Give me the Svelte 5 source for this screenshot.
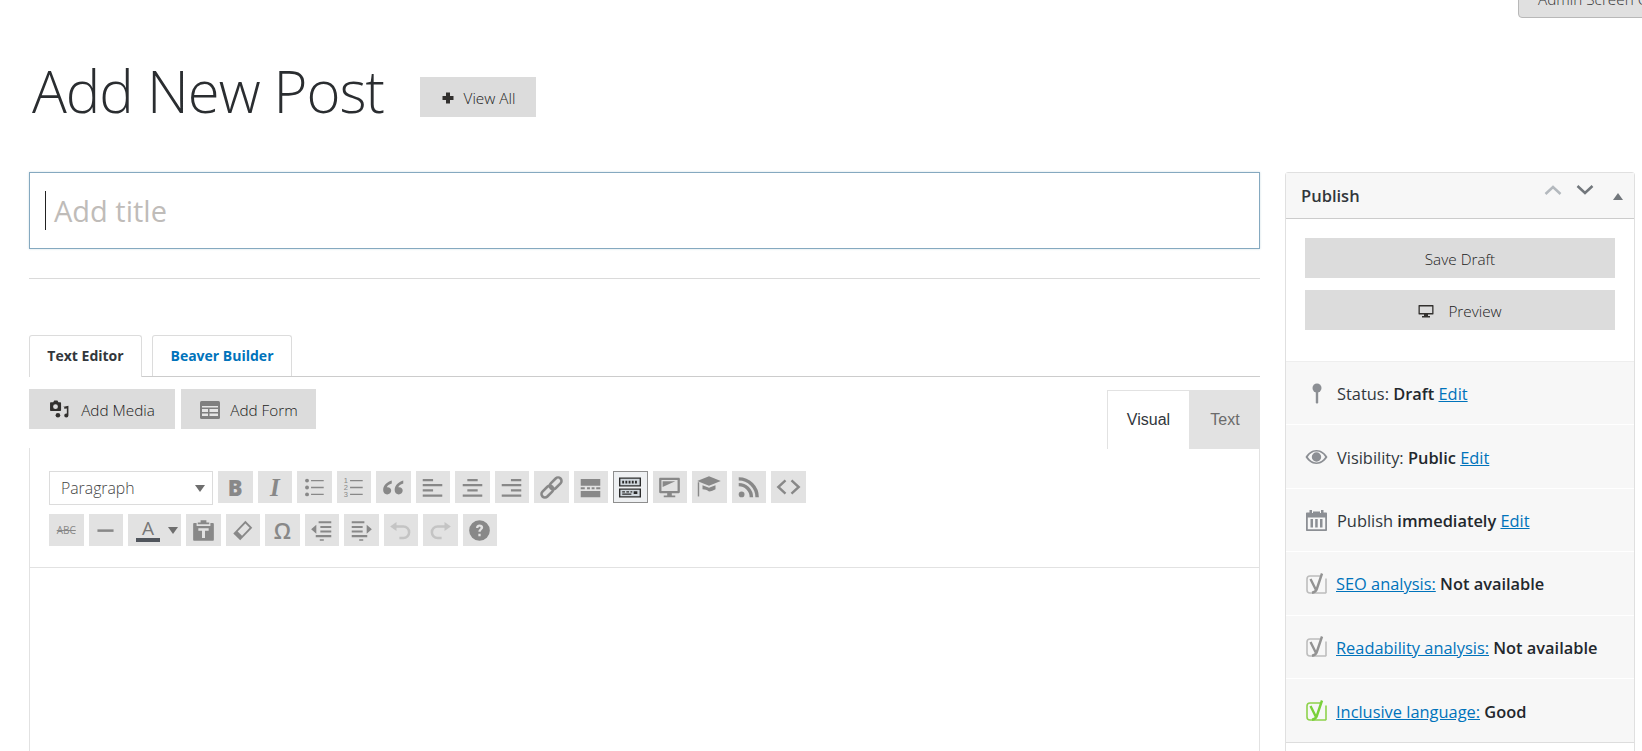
<script>
  const rows = [
    { label: 'SEO analysis:', value: 'Not available', color: '#bdbdbd', tick: '#939393' },
    { label: 'Readability analysis:', value: 'Not available', color: '#bdbdbd', tick: '#939393' },
    { label: 'Inclusive language:', value: 'Good', color: '#8ed24c', tick: '#7ad03a' }
  ];
</script>

<div class="page">
  <div class="top">
    <div class="screen-tab">Admin Screen Options</div>
  </div>

  <div class="heading">
    <h1>Add New Post</h1>
    <a class="btn view-all" href="#top">
      <svg width="14" height="14" viewBox="0 0 14 14"><path d="M5 1.500h4V5h3.500v4H9v3.500H5V9H1.500V5H5z" fill="#32302e" /></svg>
      View All
    </a>
  </div>

  <div class="columns">
    <div class="main">
      <div class="title-box"><span class="caret"></span><span class="placeholder">Add title</span></div>
      <hr />

      <div class="tabs">
        <div class="tab active">Text Editor</div>
        <div class="tab builder">Beaver Builder</div>
      </div>

      <div class="media-row">
        <div class="media-buttons">
          <div class="btn media">
            <svg width="21" height="21" viewBox="0 0 20 20" fill="#32302e">
              <path d="M2 3h2l1-1.500h3L9 3h1.500c.6 0 1 .4 1 1v6.500c0 .6-.4 1-1 1H2c-.6 0-1-.4-1-1V4c0-.6.4-1 1-1zm4.200 2a2.300 2.300 0 1 0 0 4.600 2.300 2.300 0 0 0 0-4.600z" />
              <path d="M13 7.500l5.500-1v9.200a2 2 0 1 1-2-2c.2 0 .3 0 .5.100V9l-2.500.4v-1.900z" />
              <circle cx="8.500" cy="15.500" r="2.200" />
            </svg>
            Add Media
          </div>
          <div class="btn form">
            <svg width="22" height="20" viewBox="0 0 22 20">
              <rect x="1" y="1" width="20" height="18" rx="1.500" fill="#808080" />
              <path d="M3 6h16v1.500H3zM3 9h6v3H3zM10.500 9H19v3h-8.500zM3 13.500h6v2.500H3zM10.500 13.500H19V16h-8.500z" fill="#e6e6e6" />
            </svg>
            Add Form
          </div>
        </div>
        <div class="mode-tabs">
          <div class="mode on">Visual</div>
          <div class="mode">Text</div>
        </div>
      </div>

      <div class="editor">
        <div class="toolbar">
          <div class="tb-row">
            <div class="select">Paragraph<span class="arrow"></span></div>
            <div class="tb glyph bold">B</div>
            <div class="tb glyph ital">I</div>
            <div class="tb"><svg viewBox="0 0 20 20"><circle cx="3.500" cy="4" r="1.700" /><circle cx="3.500" cy="10" r="1.700" /><circle cx="3.500" cy="16" r="1.700" /><path d="M7 3.400h11v1.200H7zM7 9.400h11v1.200H7zM7 15.400h11v1.200H7z" /></svg></div>
            <div class="tb"><svg viewBox="0 0 20 20"><text x="1.500" y="6.500" class="num">1</text><text x="1.500" y="12.500" class="num">2</text><text x="1.500" y="18.500" class="num">3</text><path d="M7 3.400h11v1.200H7zM7 9.400h11v1.200H7zM7 15.400h11v1.200H7z" /></svg></div>
            <div class="tb"><svg viewBox="0 0 20 20"><path d="M8.500 4C5 5 1 7.800 1 12.200 1 14.500 2.500 16 4.500 16S8 14.500 8 12.700s-1.300-3-3-3c-.3 0-.6 0-.8.100.5-1.200 2-2.600 4.300-3.200zM18.500 4C15 5 11 7.800 11 12.200c0 2.300 1.500 3.800 3.500 3.800s3.500-1.500 3.500-3.300-1.300-3-3-3c-.3 0-.6 0-.8.100.5-1.200 2-2.600 4.300-3.200z" /></svg></div>
            <div class="tb"><svg viewBox="0 0 20 20"><path d="M1.500 2.500h9v2h-9zM1.500 7h17v2h-17zM1.500 11.500h9v2h-9zM1.500 16h17v2h-17z" /></svg></div>
            <div class="tb"><svg viewBox="0 0 20 20"><path d="M5.500 2.500h9v2h-9zM1.500 7h17v2h-17zM5.500 11.500h9v2h-9zM1.500 16h17v2h-17z" /></svg></div>
            <div class="tb"><svg viewBox="0 0 20 20"><path d="M9.500 2.500h9v2h-9zM1.500 7h17v2h-17zM9.500 11.500h9v2h-9zM1.500 16h17v2h-17z" /></svg></div>
            <div class="tb">
              <svg viewBox="0 0 20 20" class="line">
                <rect x="7.600" y="3.400" width="12" height="6" rx="3" transform="rotate(-45 13.600 6.400)" stroke-width="2.200" />
                <rect x=".4" y="10.600" width="12" height="6" rx="3" transform="rotate(-45 6.400 13.600)" stroke-width="2.200" />
              </svg>
            </div>
            <div class="tb"><svg viewBox="0 0 20 20"><path d="M1.500 2.500h17v6h-17zM1.500 13h17v5.500h-17zM1.500 9.800h3.500v1.700H1.500zM7 9.800h2.500v1.700H7zM11 9.800h2.500v1.700H11zM15 9.800h3.500v1.700H15z" /></svg></div>
            <div class="tb pressed">
              <svg viewBox="0 0 24 22">
                <path d="M0 0h24v10H0zM0 12h24v10H0z" fill="#2b2b2b" />
                <path d="M1.500 1.500h21v7h-21zM1.500 13.500h21v7h-21z" fill="#cfd6dc" />
                <path d="M3.500 3.500h2v3h-2zM7 3.500h2v3H7zM10.500 3.500h2v3h-2zM14 3.500h2v3h-2zM17.500 3.500h2v3h-2zM3.500 15h3v1.500h-3zM8 15h3v1.500H8zM12.500 15h2v1.500h-2zM16 15h4v3h-4zM3.500 17.500h10V19h-10z" fill="#2b2b2b" />
              </svg>
            </div>
            <div class="tb"><svg viewBox="0 0 20 20"><path d="M2 1.500h16c.6 0 1 .4 1 1V14c0 .6-.4 1-1 1h-6v2h3v1.500H5V17h3v-2H2c-.6 0-1-.4-1-1V2.500c0-.6.4-1 1-1zm1 2v9.500h14V3.500z" /><path d="M4 4.500h11l-11 5z" /></svg></div>
            <div class="tb"><svg viewBox="0 0 22 20" class="cap"><path d="M11 1l10 4-10 4-10-4z" /><path d="M5.500 8.500L11 10.700l5.500-2.200v3.300c-1.700 1-3.500 1.500-5.500 2-1.500-1.300-3.500-2-5.500-2z" /><path d="M1.500 6h1.200v12H1.500z" /></svg></div>
            <div class="tb"><svg viewBox="0 0 20 20"><circle cx="4" cy="16" r="2.500" /><path d="M1.500 7.500a11 11 0 0 1 11 11" class="rss" /><path d="M1.500 2.500a16 16 0 0 1 16 16" class="rss" /></svg></div>
            <div class="tb"><svg viewBox="0 0 22 20" class="line code"><path d="M8.500 4.500L2.500 10l6 5.500M13.500 4.500l6 5.500-6 5.500" stroke-width="2" /></svg></div>
          </div>
          <div class="tb-row">
            <div class="tb glyph strike">ABC</div>
            <div class="tb"><svg viewBox="0 0 20 20"><path d="M3 9h14v2.200H3z" /></svg></div>
            <div class="tb wide">
              <span class="color-a">A</span><span class="arrow"></span>
            </div>
            <div class="tb"><svg viewBox="0 0 20 20"><path d="M7.500 1h5v2H15v1.500H5V3h2.500zM2 3.500h2V6h12V3.500h2c.6 0 1 .4 1 1V18c0 .6-.4 1-1 1H2c-.6 0-1-.4-1-1V4.500c0-.6.4-1 1-1z" /><path d="M5.500 8h9v2.300h-3.200v6.200H8.700v-6.200H5.500z" fill="#e2e2e2" /></svg></div>
            <div class="tb"><svg viewBox="0 0 20 20"><path d="M12.500 1.500l6 6L8 18.500l-6-6z" /><path d="M12.500 3.900l3.700 3.600-6.600 7-3.800-3.700z" fill="#e2e2e2" /></svg></div>
            <div class="tb glyph omega">Ω</div>
            <div class="tb"><svg viewBox="0 0 20 20"><path d="M7.500 2h11v1.800h-11zM9 6h9.500v1.800H9zM9 10h9.500v1.800H9zM5 14h13.500v1.800H5zM8.500 17.500h3.500V19H8.500zM1 8.900l4.500-4v8z" /></svg></div>
            <div class="tb"><svg viewBox="0 0 20 20"><path d="M1.500 2h11v1.800h-11zM1.500 6h9.500v1.800H1.500zM1.500 10h9.500v1.800H1.500zM1.500 14h13.500v1.800H1.500zM8 17.500h3.500V19H8zM19 8.900l-4.500-4v8z" /></svg></div>
            <div class="tb"><svg viewBox="0 0 20 20" class="off"><path d="M6.500 2.500v8l-5.500-4z" stroke="none" fill="#c4c4c4" /><path d="M6 6.500h6.500a5 5 0 0 1 0 10H9" stroke-width="2.200" /></svg></div>
            <div class="tb"><svg viewBox="0 0 20 20" class="off"><path d="M13.500 2.500v8l5.500-4z" stroke="none" fill="#c4c4c4" /><path d="M14 6.500H7.500a5 5 0 0 0 0 10H11" stroke-width="2.200" /></svg></div>
            <div class="tb"><svg viewBox="0 0 20 20"><path fill-rule="evenodd" d="M10 1a9 9 0 1 1 0 18 9 9 0 0 1 0-18zM7 7.800h2c0-.7.400-1.100 1-1.100s1 .4 1 .9c0 1-2 1.300-2 3.400h2c0-1.500 2.200-1.800 2.200-3.700C13.200 5.700 11.900 4.800 10 4.800s-3 1.200-3 3zM9 12.800V15h2v-2.200z" /></svg></div>
          </div>
        </div>
      </div>
    </div>

    <aside class="side">
      <div class="box-head">
        <h2>Publish</h2>
        <div class="head-icons">
          <svg width="18" height="10" viewBox="0 0 18 10" class="chev up"><path d="M1.500 9L9 2l7.500 7" /></svg>
          <svg width="18" height="10" viewBox="0 0 18 10" class="chev"><path d="M1.500 1L9 8l7.500-7" /></svg>
          <span class="collapse"></span>
        </div>
      </div>
      <div class="actions">
        <div class="btn full">Save Draft</div>
        <div class="btn full">
          <svg width="16" height="14" viewBox="0 0 16 14" fill="#32302e"><path fill-rule="evenodd" d="M1 1h14c.3 0 .5.200.5.500v8.500c0 .3-.2.500-.5.500h-5v1.500h2V13.500H4V12h2v-1.500H1c-.3 0-.5-.2-.5-.5V1.500C.5 1.200.7 1 1 1zm.8 1.500V9h12.400V2.500z" /></svg>
          <span class="gap">Preview</span>
        </div>
      </div>
      <div class="meta">
        <div class="row">
          <span class="icon"><svg width="12" height="22" viewBox="4 0 12 22" fill="#8c8f94"><circle cx="10" cy="5" r="4.500" /><path d="M8.800 8h2.400v11.500l-1.200 1.500-1.200-1.500z" /></svg></span>
          <span>Status: <b>Draft</b> <a href="#top">Edit</a></span>
        </div>
        <div class="row">
          <span class="icon"><svg width="23" height="16" viewBox="0 0 23 16" fill="#8c8f94"><path fill-rule="evenodd" d="M11.500 1C16.500 1 20.500 4.500 22.500 8c-2 3.500-6 7-11 7s-9-3.500-11-7c2-3.500 6-7 11-7zm0 1.600C8 2.600 5 4.500 2.800 8c2.200 3.500 5.200 5.400 8.700 5.400s6.500-1.900 8.700-5.400C18 4.500 15 2.600 11.500 2.600zm0 .7a4.700 4.700 0 1 1 0 9.400 4.700 4.700 0 0 1 0-9.400z" /></svg></span>
          <span>Visibility: <b>Public</b> <a href="#top">Edit</a></span>
        </div>
        <div class="row">
          <span class="icon"><svg width="21" height="21" viewBox="0 0 21 21" fill="#8c8f94"><path fill-rule="evenodd" d="M3.500 0H6v3h1V1.500h7V3h1V0h2.500v2.500H20c.6 0 1 .4 1 1V20c0 .6-.4 1-1 1H1c-.6 0-1-.4-1-1V3.500c0-.6.4-1 1-1h2.500zM1.800 7.500v11.700h17.400V7.500zM4.500 9h2.500v8.500H4.500zM9.200 9h2.500v8.500H9.200zM14 9h2.500v8.500H14z" /></svg></span>
          <span>Publish <b>immediately</b> <a href="#top">Edit</a></span>
        </div>
        {#each rows as r}
          <div class="row yoast">
            <span class="icon"><svg width="21" height="22" viewBox="0 0 21 22" fill="none">
              <path d="M14.500 3H4C2.300 3 1 4.300 1 6v11c0 1.700 1.300 3 3 3h15.500l.500-.5V5.500" stroke={r.color} stroke-width="1.600" />
              <path d="M4.500 6l5.500 11M16 .5L10.800 16c-.7 2-2 3.300-4.800 3.700" stroke={r.tick} stroke-width="2.400" />
            </svg></span>
            <span><a href="#top">{r.label}</a> <b>{r.value}</b></span>
          </div>
        {/each}
      </div>
    </aside>
  </div>
</div>

<style>
  :global(body) {
    margin: 0;
    background: #fff;
  }

  .page {
    width: 1642px;
    height: 751px;
    overflow: hidden;
    font-family: "Open Sans", sans-serif;
    color: #32373c;
    background: #fff;
  }

  .top {
    height: 18px;
    display: flex;
    justify-content: flex-end;
    align-items: flex-end;
    overflow: hidden;
  }

  .screen-tab {
    flex: none;
    width: 190px;
    margin-right: -66px;
    height: 30px;
    line-height: 21px;
    padding-left: 19px;
    box-sizing: border-box;
    background: #e0e0e0;
    border: 1px solid #b8b8b8;
    border-radius: 0 0 4px 4px;
    font-size: 15.300px;
    font-weight: 300;
    color: #333;
    white-space: nowrap;
  }

  .heading {
    display: flex;
    align-items: flex-start;
    height: 154px;
    padding-left: 32px;
    box-sizing: border-box;
  }

  h1 {
    margin: 0;
    padding-top: 35px;
    font-size: 58px;
    line-height: 76px;
    font-weight: 300;
    color: #2a2d30;
    letter-spacing: -1px;
  }

  .btn {
    display: flex;
    align-items: center;
    justify-content: center;
    background: #dcdcdc;
    color: #222;
    font-size: 15.300px;
    text-decoration: none;
    box-sizing: border-box;
    height: 40px;
    padding-top: 1px;
  }

  .view-all {
    margin: 59px 0 0 36px;
    width: 116px;
    gap: 9px;
    font-weight: 300;
  }

  .columns {
    display: grid;
    grid-template-columns: 1231px 350px;
    gap: 25px;
    padding-left: 29px;
  }

  .title-box {
    height: 77px;
    box-sizing: border-box;
    border: 1px solid #85a9c0;
    box-shadow: 0 0 2px rgba(133, 169, 192, .4);
    display: flex;
    align-items: center;
    padding-left: 15px;
  }

  .caret {
    width: 1px;
    height: 39px;
    background: #222;
    margin-right: 8px;
  }

  .placeholder {
    font-size: 29px;
    color: #bfbcb9;
  }

  hr {
    margin: 29px 0 0;
    border: 0;
    border-top: 1px solid #dadada;
  }

  .tabs {
    display: flex;
    gap: 10px;
    margin-top: 56px;
    height: 41px;
    border-bottom: 1px solid #ccc;
  }

  .tab {
    box-sizing: border-box;
    height: 41px;
    line-height: 39px;
    font-size: 14px;
    font-weight: 700;
    border: 1px solid #dcdcdc;
    border-bottom: 0;
    border-radius: 3px 3px 0 0;
    text-align: center;
  }

  .tab.active {
    width: 113px;
    background: #fff;
    height: 42px;
  }

  .builder {
    color: #0073bb;
    width: 140px;
  }

  .media-row {
    display: flex;
    justify-content: space-between;
    align-items: flex-start;
    margin-top: 12px;
    height: 60px;
  }

  .media-buttons {
    display: flex;
    gap: 6px;
  }

  .media { width: 146px; gap: 11px; font-weight: 300; }
  .form { width: 135px; gap: 9px; font-weight: 300; }

  .mode-tabs {
    display: flex;
    font-family: "Liberation Sans", sans-serif;
    font-size: 16px;
    margin-top: 1px;
  }

  .mode {
    box-sizing: border-box;
    width: 70px;
    height: 59px;
    line-height: 59px;
    text-align: center;
    background: #e2e2e2;
    color: #6b6b6b;
  }

  .mode.on {
    width: 83px;
    background: #fff;
    color: #32373c;
    border: 1px solid #e2e2e2;
    border-bottom: 0;
    line-height: 57px;
  }

  .editor {
    height: 320px;
    border: 1px solid #e2e2e2;
    border-top: 0;
    margin-top: -1px;
  }

  .toolbar {
    height: 120px;
    box-sizing: border-box;
    padding: 23px 0 0 19px;
    border-bottom: 1px solid #e2e2e2;
  }

  .tb-row {
    display: flex;
    gap: 5px;
    margin-bottom: 11px;
    height: 32px;
  }

  .select {
    box-sizing: border-box;
    width: 164px;
    height: 34px;
    border: 1px solid #dcdcdc;
    padding-left: 11px;
    font-size: 15.800px;
    color: #444;
    font-weight: 300;
    display: flex;
    justify-content: space-between;
    align-items: center;
    padding-right: 7px;
  }

  .arrow {
    width: 0;
    height: 0;
    border-left: 5px solid transparent;
    border-right: 5px solid transparent;
    border-top: 7px solid #6e6e6e;
  }

  .tb {
    box-sizing: border-box;
    width: 34.500px;
    height: 32px;
    background: #e2e2e2;
    display: flex;
    align-items: center;
    justify-content: center;
    color: #888;
  }

  .tb svg {
    width: 23px;
    height: 23px;
    fill: #888;
  }

  .tb .line {
    fill: none;
    stroke: #888;
  }

  .tb .off {
    fill: none;
    stroke: #c4c4c4;
  }

  .tb .rss {
    fill: none;
    stroke: #888;
    stroke-width: 3;
  }

  .tb .cap {
    width: 26px;
    height: 24px;
  }

  .tb .code {
    width: 27px;
    height: 24px;
  }

  .num {
    font-family: "Liberation Sans", sans-serif;
    font-size: 6.500px;
  }

  .tb.pressed {
    background: #eef0f2;
    border: 1px solid #8e8e8e;
  }

  .tb.pressed svg {
    width: 22px;
    height: 21px;
  }

  .glyph { line-height: 1; }

  .bold {
    font-size: 22px;
    font-weight: 800;
    font-family: "Open Sans", sans-serif;
  }

  .ital {
    font-size: 25px;
    font-weight: 700;
    font-style: italic;
    font-family: "Liberation Serif", serif;
  }

  .strike {
    font-size: 10px;
    text-decoration: line-through;
    font-family: "Open Sans", sans-serif;
  }

  .omega {
    font-size: 22px;
    font-family: "Open Sans", sans-serif;
    font-weight: 600;
  }

  .wide {
    width: 53px;
    gap: 8px;
    padding-left: 5px;
  }

  .color-a {
    width: 24px;
    font-size: 19px;
    line-height: 20px;
    text-align: center;
    border-bottom: 4px solid #50555c;
    color: #777;
  }

  .side {
    border: 1px solid #e0e0e0;
    border-radius: 3px 3px 0 0;
    height: 580px;
    font-size: 16.400px;
  }

  .box-head {
    height: 45px;
    background: #f7f7f7;
    border-bottom: 1px solid #ccc;
    display: flex;
    align-items: center;
    justify-content: space-between;
    padding: 0 11px 0 15px;
  }

  h2 {
    margin: 0;
    font-size: 16.500px;
    font-weight: 600;
    color: #32373c;
  }

  .head-icons {
    display: flex;
    align-items: center;
    gap: 14px;
    margin-bottom: 12px;
  }

  .chev {
    fill: none;
    stroke: #72777c;
    stroke-width: 2.500;
  }

  .chev.up { stroke: #b4b9be; }

  .collapse {
    width: 0;
    height: 0;
    border-left: 5px solid transparent;
    border-right: 5px solid transparent;
    border-bottom: 7px solid #72777c;
    margin: 14px 0 0 5px;
  }

  .actions {
    height: 143px;
    box-sizing: border-box;
    padding: 19px 19px 0;
    display: flex;
    flex-direction: column;
    gap: 12px;
    border-bottom: 1px solid #eee;
  }

  .full { font-weight: 300; }
  .gap { margin-left: 14px; }

  .meta { background: #f7f7f7; border-bottom: 1px solid #ddd; }

  .row {
    height: 63.400px;
    box-sizing: border-box;
    display: flex;
    align-items: center;
    padding: 1px 0 0 19px;
    border-bottom: 1px solid #fff;
    color: #32373c;
    white-space: nowrap;
  }

  .row:last-child { border-bottom: 0; }

  .icon {
    flex: none;
    width: 23px;
    margin-right: 9px;
    display: flex;
    justify-content: center;
  }

  .yoast .icon { margin-right: 8px; }

  .row a { color: #0073bb; }
  .row b { font-weight: 600; color: #23282d; }
</style>
